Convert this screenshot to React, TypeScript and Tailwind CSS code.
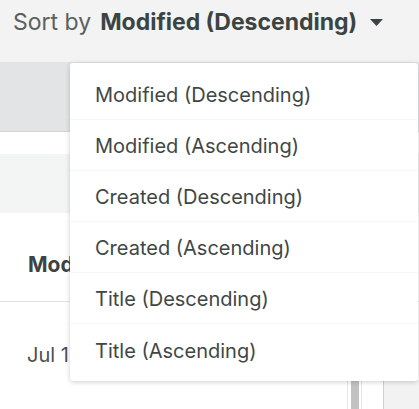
import { useState } from "react";

const options = [
  "Modified (Descending)",
  "Modified (Ascending)",
  "Created (Descending)",
  "Created (Ascending)",
  "Title (Descending)",
  "Title (Ascending)",
];

export default function App() {
  const [selected, setSelected] = useState(options[0]);
  const [open, setOpen] = useState(true);

  return (
    <div className="relative h-[409px] w-[419px] overflow-hidden bg-white font-['Inter',sans-serif] text-[#3c4443]">
      {/* sort bar */}
      <div className="flex h-[62px] items-start bg-[#f3f3f3] pl-[13px] pt-[8px]">
        <span className="text-[23px] leading-[28px] text-[#5a605f]">Sort by</span>
        <button
          className="ml-[9px] flex items-center text-[23px] font-bold leading-[28px] text-[#3c4443]"
          onClick={() => setOpen(!open)}
        >
          {selected}
          <svg className="ml-[13px]" width="13" height="7" viewBox="0 0 13 7">
            <path d="M0 0h13L6.5 7z" fill="#3c4443" />
          </svg>
        </button>
      </div>

      {/* page beneath */}
      <div className="h-[70px] border-b border-[#d3d5d5] bg-[#e3e4e5]" />
      <div className="h-[22px]" />
      <div className="h-[59px] bg-[#f3f4f4]" />
      <div className="flex h-[89px] items-end border-b border-[#e2e2e2] pb-[21px] pl-[28px]">
        <span className="text-[21px] font-bold">Modified</span>
      </div>
      <div className="h-[78px] overflow-hidden pl-[27px] pt-[39px]">
        <span className="text-[20px] leading-[28px] text-[#4a5150]">Jul 1</span>
      </div>
      <div className="flex h-[30px]">
        <div className="w-[347px]" />
        <div className="w-px bg-[#e6e6e6]" />
        <div className="ml-[3px] w-[8px] bg-[#c2c2c2]" />
        <div className="ml-[2px] w-px bg-[#e6e6e6]" />
        <div className="w-[21px]" />
        <div className="w-px bg-[#d0d0d0]" />
        <div className="flex-1 bg-[#f2f2f2]" />
      </div>

      {/* dropdown menu */}
      {open && (
        <div className="absolute left-[70px] top-[63px] w-[348px] rounded-[3px] bg-white py-[6px] shadow-[0_1px_5px_rgba(0,0,0,0.2)]">
          {options.map((o, i) => (
            <div
              key={o}
              onClick={() => {
                setSelected(o);
                setOpen(false);
              }}
              className={`flex h-[51px] cursor-pointer items-center pl-[25px] pt-[2px] text-[20px] text-[#3f4746] ${
                i < options.length - 1 ? "border-b border-[#f7f7f7]" : ""
              }`}
            >
              {o}
            </div>
          ))}
        </div>
      )}
    </div>
  );
}
